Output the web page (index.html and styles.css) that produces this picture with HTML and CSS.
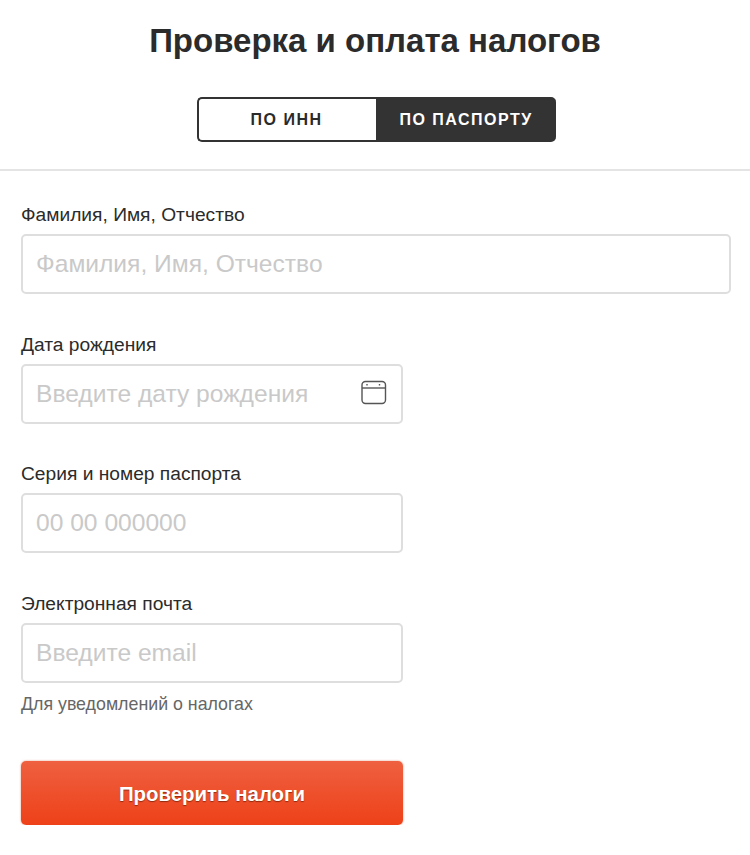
FILE: index.html
```html
<!DOCTYPE html>
<html lang="ru">
<head>
  <meta charset="UTF-8">
  <meta name="viewport" content="width=device-width, initial-scale=1.0">
  <title>Проверка и оплата налогов</title>
  <link rel="stylesheet" href="styles.css">
</head>
<body>

  <header class="top">
    <h1 class="title">Проверка и оплата налогов</h1>
    <div class="tabs">
      <button class="tab" type="button">ПО ИНН</button>
      <button class="tab tab-active" type="button">ПО ПАСПОРТУ</button>
    </div>
  </header>

  <form class="form">
    <div class="field">
      <label class="label" for="fio">Фамилия, Имя, Отчество</label>
      <input class="input" id="fio" type="text" placeholder="Фамилия, Имя, Отчество">
    </div>

    <div class="field field-short">
      <label class="label" for="birth">Дата рождения</label>
      <div class="input-wrap">
        <input class="input" id="birth" type="text" placeholder="Введите дату рождения">
        <svg class="calendar" width="26" height="25" viewBox="0 0 26 25" fill="none" stroke="#555" stroke-width="1.4">
          <rect x="1" y="1.5" width="23.5" height="22" rx="3.5"/>
          <path d="M1 8h23.5"/>
          <path d="M6 4v1.5M18.5 4v1.5"/>
        </svg>
      </div>
    </div>

    <div class="field field-short">
      <label class="label" for="passport">Серия и номер паспорта</label>
      <input class="input" id="passport" type="text" placeholder="00 00 000000">
    </div>

    <div class="field field-short field-email">
      <label class="label" for="email">Электронная почта</label>
      <input class="input" id="email" type="text" placeholder="Введите email">
      <p class="hint">Для уведомлений о налогах</p>
    </div>

    <button class="submit" type="button">Проверить налоги</button>
  </form>

</body>
</html>
```

FILE: styles.css
```css
body {
  margin: 0;
  background-color: #fff;
  font-family: 'Liberation Sans', Arial, sans-serif;
  color: #2b2b2b;
}
.top {
  height: 169px;
  border-bottom: 2px solid #e4e4e4;
  text-align: center;
}
.title {
  margin: 0;
  padding-top: 21px;
  font-size: 33px;
  line-height: 40px;
  font-weight: bold;
  color: #2b2b2b;
}
.tabs {
  display: flex;
  justify-content: center;
  margin-top: 36px;
  padding-left: 3px;
}
.tab {
  width: 179px;
  height: 45px;
  padding: 0 2px 0 0;
  font-family: inherit;
  font-size: 16px;
  font-weight: bold;
  letter-spacing: 1.5px;
  color: #2b2b2b;
  background-color: #fff;
  border: 2px solid #333;
  border-right: none;
  border-radius: 5px 0 0 5px;
}
.tab-active {
  width: 180px;
  color: #fff;
  background-color: #333;
  border-radius: 0 5px 5px 0;
}
.form {
  padding: 32px 19px 0 21px;
}
.field {
  margin-bottom: 38.67px;
}
.field-short {
  width: 382px;
}
.field-email {
  margin-bottom: 46px;
}
.label {
  display: block;
  margin-bottom: 8px;
  font-size: 19.2px;
  line-height: 23px;
  color: #2b2b2b;
}
.input {
  display: block;
  box-sizing: border-box;
  width: 100%;
  height: 60px;
  padding: 0 13px;
  font-family: inherit;
  font-size: 24.6px;
  color: #2b2b2b;
  background-color: #fff;
  border: 2px solid #dedede;
  border-radius: 5px;
  outline: none;
}
.input::placeholder {
  color: #c9c9c9;
  opacity: 1;
}
.input-wrap {
  position: relative;
}
.calendar {
  position: absolute;
  top: 16px;
  right: 16px;
}
.hint {
  margin: 10px 0 0;
  font-size: 17.8px;
  line-height: 22px;
  color: #666;
}
.submit {
  display: block;
  width: 382px;
  height: 64px;
  padding: 3px 0 0;
  font-family: inherit;
  font-size: 20.4px;
  font-weight: bold;
  color: #fff;
  background: linear-gradient(#ee6040, #ee4119);
  border: none;
  border-radius: 5px;
  box-shadow: 0 0 2px rgba(200, 60, 20, 0.6);
  text-shadow: 0 1px 1px rgba(80, 20, 0, 0.6);
}
```
